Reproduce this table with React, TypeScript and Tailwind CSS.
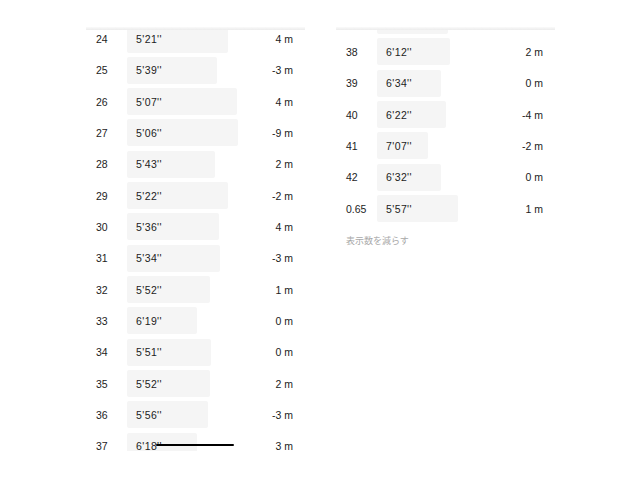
import React from "react";

type Split = { label: string; pace: string; bar: number; elev: string; ghost?: boolean };

const leftSplits: Split[] = [
  { label: "24", pace: "5'21''", bar: 101, elev: "4 m" },
  { label: "25", pace: "5'39''", bar: 90, elev: "-3 m" },
  { label: "26", pace: "5'07''", bar: 110, elev: "4 m" },
  { label: "27", pace: "5'06''", bar: 111, elev: "-9 m" },
  { label: "28", pace: "5'43''", bar: 88, elev: "2 m" },
  { label: "29", pace: "5'22''", bar: 101, elev: "-2 m" },
  { label: "30", pace: "5'36''", bar: 92, elev: "4 m" },
  { label: "31", pace: "5'34''", bar: 93, elev: "-3 m" },
  { label: "32", pace: "5'52''", bar: 83, elev: "1 m" },
  { label: "33", pace: "6'19''", bar: 70, elev: "0 m" },
  { label: "34", pace: "5'51''", bar: 84, elev: "0 m" },
  { label: "35", pace: "5'52''", bar: 83, elev: "2 m" },
  { label: "36", pace: "5'56''", bar: 81, elev: "-3 m" },
  { label: "37", pace: "6'18''", bar: 70, elev: "3 m" },
];

// first entry is the tail of split 37 flowing over from the left column
const rightSplits: Split[] = [
  { label: "37", pace: "", bar: 71, elev: "", ghost: true },
  { label: "38", pace: "6'12''", bar: 73, elev: "2 m" },
  { label: "39", pace: "6'34''", bar: 64, elev: "0 m" },
  { label: "40", pace: "6'22''", bar: 69, elev: "-4 m" },
  { label: "41", pace: "7'07''", bar: 51, elev: "-2 m" },
  { label: "42", pace: "6'32''", bar: 64, elev: "0 m" },
  { label: "0.65", pace: "5'57''", bar: 81, elev: "1 m" },
];

const SplitRow = ({ split }: { split: Split }) => (
  <div className="flex h-[31.33px] items-center pl-[10px] pr-[12px] text-[10.5px] text-[#1c1c1c]">
    <span className="mt-[2px] w-[31px] shrink-0">{split.ghost ? "" : split.label}</span>
    <div className="flex-1">
      <div
        className="flex h-[27px] items-center rounded-[2px] bg-[#f5f5f5] pl-[9px]"
        style={{ width: split.bar }}
      >
        <span className="mt-[2px] whitespace-nowrap tracking-[0.4px]">{split.pace}</span>
      </div>
    </div>
    <span className="mt-[2px] whitespace-nowrap text-right">{split.elev}</span>
  </div>
);

const TopEdge = () => (
  <div className="h-[3px] bg-gradient-to-b from-[#fafafa] to-[#ececec]" />
);

export default function App() {
  return (
    <div
      className="relative flex h-[480px] w-[640px] gap-[31px] bg-white pl-[86px] pt-[27px]"
      style={{ fontFamily: '"Liberation Sans", Arial, "Noto Sans CJK JP", sans-serif' }}
    >
      <div className="w-[219px]">
        <TopEdge />
        <div className="h-[421px] overflow-hidden">
          <div className="mt-[-6.67px]">
            {leftSplits.map((s) => (
              <SplitRow key={s.label} split={s} />
            ))}
          </div>
        </div>
      </div>

      <div className="w-[219px]">
        <TopEdge />
        <div className="overflow-hidden">
          <div className="mt-[-25px]">
            {rightSplits.map((s) => (
              <SplitRow key={s.label} split={s} />
            ))}
          </div>
          <div className="mt-[11px] pl-[10px] text-[9px] leading-[13px] text-[#a8a8a8]">
            表示数を減らす
          </div>
        </div>
      </div>

      {/* scrubber handle */}
      <div className="absolute left-[156px] top-[444px] h-[2px] w-[78px] rounded-full bg-black" />
    </div>
  );
}
